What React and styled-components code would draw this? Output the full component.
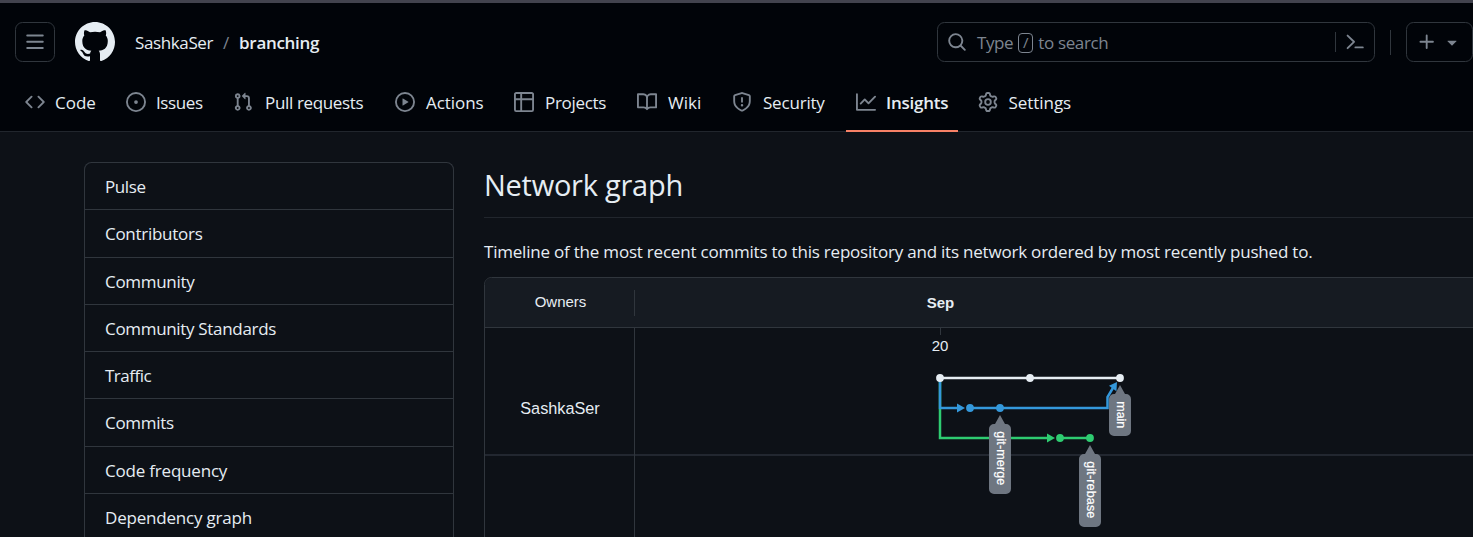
import React from "react";
import styled, { createGlobalStyle } from "styled-components";

const GlobalStyle = createGlobalStyle`
  *, *::before, *::after { box-sizing: border-box; }
  body {
    margin: 0;
    background: #0d1117;
    color: #e6edf3;
    font-family: "Open Sans", "Noto Sans", sans-serif;
    font-size: 17px;
    line-height: 24px;
    overflow: hidden;
  }
`;

const Page = styled.div`
  height: 537px;
  overflow: hidden;
  display: flex;
  flex-direction: column;
`;

const Header = styled.header`
  flex: none;
  height: 132px;
  background: #010409;
  border-top: 3px solid #42434e;
  border-bottom: 1px solid #21262d;
`;

const TopBar = styled.div`
  height: 78px;
  padding-left: 15px;
  display: flex;
  align-items: center;
`;

const MenuButton = styled.button`
  width: 40px;
  height: 40px;
  padding: 0;
  margin-right: 20px;
  display: grid;
  place-items: center;
  background: transparent;
  border: 1px solid #30363d;
  border-radius: 7.5px;
`;

const Text = styled.span`
  letter-spacing: ${(p) => p.$ls || 0}px;
  white-space: nowrap;
`;

const Breadcrumb = styled.nav`
  display: flex;
  flex: 1;
  margin-left: 20px;
  padding-top: 2px;
  b { font-weight: 600; }
`;

const Slash = styled.span`
  width: 26px;
  text-align: center;
  color: #7d8590;
`;

const Search = styled.div`
  width: 438px;
  height: 40px;
  padding: 0 9px;
  display: flex;
  align-items: center;
  color: #7d8590;
  border: 1px solid #30363d;
  border-radius: 7.5px;
`;

const SearchHint = styled.div`
  flex: 1;
  display: flex;
  align-items: center;
  gap: 5px;
  margin-left: 10px;
  padding-top: 2px;
`;

const Key = styled.kbd`
  width: 15px;
  height: 20px;
  font: 15px/17px "Open Sans", sans-serif;
  text-align: center;
  border: 1px solid #7d8590;
  border-radius: 4px;
`;

const Divider = styled.span`
  width: 1px;
  height: ${(p) => p.$h}px;
  margin: ${(p) => p.$m};
  background: #30363d;
`;

const CreateButton = styled.button`
  width: 67px;
  height: 40px;
  padding: 0 10px;
  display: flex;
  align-items: center;
  justify-content: space-between;
  background: transparent;
  border: 1px solid #30363d;
  border-radius: 7.5px;
`;

const Tabs = styled.nav`
  display: flex;
  gap: 10px;
  padding: 1px 0 0 15px;
  height: 51px;
`;

const Tab = styled.a`
  height: 50px;
  padding: 0 10px 8px;
  display: flex;
  align-items: center;
  gap: ${(p) => p.$gap || 10}px;
  font-weight: ${(p) => (p.$active ? 600 : 400)};
  border-bottom: 2px solid ${(p) => (p.$active ? "#f78166" : "transparent")};
`;

const TabLabel = styled(Text)`
  width: ${(p) => p.$w}px;
  padding-top: 2px;
`;

const Svg = styled.svg`
  flex: none;
  display: block;
  fill: ${(p) => p.$c || "#7d8590"};
`;

const Main = styled.main`
  flex: 1;
  display: flex;
  gap: 30px;
  padding: 30px 0 0 84px;
`;

const SideMenu = styled.ul`
  flex: none;
  width: 370px;
  margin: 0;
  padding: 0;
  list-style: none;
  height: 420px;
  border: 1px solid #30363d;
  border-bottom: 0;
  border-radius: 7.5px 7.5px 0 0;
`;

const SideItem = styled.li`
  height: 47.25px;
  padding: 12px 20px 0;
  border-bottom: 1px solid #30363d;
`;

const Content = styled.section`
  flex: none;
  width: 1000px;
`;

const Title = styled.h2`
  margin: 0 0 22px;
  height: 56px;
  font-size: 29px;
  line-height: 46px;
  font-weight: 400;
  letter-spacing: -0.25px;
  border-bottom: 1px solid #21262d;
`;

const Intro = styled.p`
  margin: 0 0 13px;
  white-space: nowrap;
  letter-spacing: -0.21px;
`;

const Network = styled.div`
  height: 270px;
  border: 1px solid #30363d;
  border-radius: 7.5px 0 0 0;
  overflow: hidden;
  font-family: "Liberation Sans", Arial, sans-serif;
`;

const NetworkHead = styled.div`
  height: 50px;
  display: flex;
  align-items: center;
  font-size: 15px;
  background: #161b22;
  border-bottom: 1px solid #30363d;
`;

const OwnersHead = styled.div`
  width: 150px;
  height: 26px;
  line-height: 24px;
  padding-left: 2px;
  text-align: center;
  border-right: 1px solid #30363d;
`;

const Month = styled.div`
  width: 611px;
  padding-top: 1px;
  text-align: center;
  font-weight: 700;
`;

const NetworkBody = styled.div`
  display: flex;
  height: 220px;
`;

const OwnerColumn = styled.div`
  flex: none;
  width: 150px;
  border-right: 1px solid #30363d;
`;

const Owner = styled.div`
  height: 128px;
  padding: 68px 0 0 1px;
  text-align: center;
  font-size: 16.25px;
  border-bottom: 2px solid #222730;
`;

const GraphSvg = styled.svg`
  display: block;
  flex: none;
  text { font-family: "Liberation Sans", Arial, sans-serif; }
`;

const PATHS = {
  menu: "M1 2.75A.75.75 0 0 1 1.75 2h12.5a.75.75 0 0 1 0 1.5H1.75A.75.75 0 0 1 1 2.75Zm0 5A.75.75 0 0 1 1.75 7h12.5a.75.75 0 0 1 0 1.5H1.75A.75.75 0 0 1 1 7.75ZM1.75 12h12.5a.75.75 0 0 1 0 1.5H1.75a.75.75 0 0 1 0-1.5Z",
  mark: "M8 0c4.42 0 8 3.58 8 8a8.013 8.013 0 0 1-5.45 7.59c-.4.08-.55-.17-.55-.38 0-.27.01-1.13.01-2.2 0-.75-.25-1.23-.54-1.48 1.78-.2 3.65-.88 3.65-3.95 0-.88-.31-1.59-.82-2.15.08-.2.36-1.02-.08-2.12 0 0-.67-.22-2.2.82-.64-.18-1.32-.27-2-.27-.68 0-1.36.09-2 .27-1.53-1.03-2.2-.82-2.2-.82-.44 1.1-.16 1.92-.08 2.12-.51.56-.82 1.28-.82 2.15 0 3.06 1.86 3.75 3.64 3.95-.23.2-.44.55-.51 1.07-.46.21-1.61.55-2.33-.66-.15-.24-.6-.83-1.23-.82-.67.01-.27.38.01.53.34.19.73.9.82 1.13.16.45.68 1.31 2.69.94 0 .67.01 1.3.01 1.49 0 .21-.15.45-.55.38A7.995 7.995 0 0 1 0 8c0-4.42 3.58-8 8-8Z",
  code: "m11.28 3.22 4.25 4.25a.75.75 0 0 1 0 1.06l-4.25 4.25a.749.749 0 0 1-1.275-.326.749.749 0 0 1 .215-.734L13.94 8l-3.72-3.72a.749.749 0 0 1 .326-1.275.749.749 0 0 1 .734.215Zm-6.56 0a.751.751 0 0 1 1.042.018.751.751 0 0 1 .018 1.042L2.06 8l3.72 3.72a.749.749 0 0 1-.326 1.275.749.749 0 0 1-.734-.215L.47 8.53a.75.75 0 0 1 0-1.06Z",
  issue: "M8 9.5a1.5 1.5 0 1 0 0-3 1.5 1.5 0 0 0 0 3ZM8 0a8 8 0 1 1 0 16A8 8 0 0 1 8 0ZM1.5 8a6.5 6.5 0 1 0 13 0 6.5 6.5 0 0 0-13 0Z",
  pull: "M1.5 3.25a2.25 2.25 0 1 1 3 2.122v5.256a2.251 2.251 0 1 1-1.5 0V5.372A2.25 2.25 0 0 1 1.5 3.25Zm5.677-.177L9.573.677A.25.25 0 0 1 10 .854V2.5h1A2.5 2.5 0 0 1 13.5 5v5.628a2.251 2.251 0 1 1-1.5 0V5a1 1 0 0 0-1-1h-1v1.646a.25.25 0 0 1-.427.177L7.177 3.427a.25.25 0 0 1 0-.354ZM3.75 2.5a.75.75 0 1 0 0 1.5.75.75 0 0 0 0-1.5Zm0 9.5a.75.75 0 1 0 0 1.5.75.75 0 0 0 0-1.5Zm8.25.75a.75.75 0 1 0 1.5 0 .75.75 0 0 0-1.5 0Z",
  play: "M8 0a8 8 0 1 1 0 16A8 8 0 0 1 8 0ZM1.5 8a6.5 6.5 0 1 0 13 0 6.5 6.5 0 0 0-13 0Zm4.879-2.773 4.264 2.559a.25.25 0 0 1 0 .428l-4.264 2.559A.25.25 0 0 1 6 10.559V5.442a.25.25 0 0 1 .379-.215Z",
  table: "M0 1.75C0 .784.784 0 1.75 0h12.5C15.216 0 16 .784 16 1.75v12.5A1.75 1.75 0 0 1 14.25 16H1.75A1.75 1.75 0 0 1 0 14.25ZM6.5 6.5v8h7.75a.25.25 0 0 0 .25-.25V6.5Zm8-1.5V1.75a.25.25 0 0 0-.25-.25H6.5V5Zm-13 1.5v7.75c0 .138.112.25.25.25H5v-8ZM5 5V1.5H1.75a.25.25 0 0 0-.25.25V5Z",
  book: "M0 1.75A.75.75 0 0 1 .75 1h4.253c1.227 0 2.317.59 3 1.501A3.743 3.743 0 0 1 11.006 1h4.245a.75.75 0 0 1 .75.75v10.5a.75.75 0 0 1-.75.75h-4.507a2.25 2.25 0 0 0-1.591.659l-.622.621a.75.75 0 0 1-1.06 0l-.622-.621A2.25 2.25 0 0 0 5.258 13H.75a.75.75 0 0 1-.75-.75Zm7.251 10.324.004-5.073-.002-2.253A2.25 2.25 0 0 0 5.003 2.5H1.5v9h3.757a3.75 3.75 0 0 1 1.994.574ZM8.755 4.75l-.004 7.322a3.752 3.752 0 0 1 1.992-.572H14.5v-9h-3.495a2.25 2.25 0 0 0-2.25 2.25Z",
  shield: "M7.467.133a1.748 1.748 0 0 1 1.066 0l5.25 1.68A1.75 1.75 0 0 1 15 3.48V7c0 1.566-.32 3.182-1.303 4.682-.983 1.498-2.585 2.813-5.032 3.855a1.697 1.697 0 0 1-1.33 0c-2.447-1.042-4.049-2.357-5.032-3.855C1.32 10.182 1 8.566 1 7V3.48a1.75 1.75 0 0 1 1.217-1.667Zm.61 1.429a.25.25 0 0 0-.153 0l-5.25 1.68a.25.25 0 0 0-.174.238V7c0 1.358.275 2.666 1.057 3.86.784 1.194 2.121 2.34 4.366 3.297a.196.196 0 0 0 .154 0c2.245-.956 3.582-2.104 4.366-3.298C13.225 9.666 13.5 8.36 13.5 7V3.48a.251.251 0 0 0-.174-.237l-5.25-1.68ZM8.75 4.75v3a.75.75 0 0 1-1.5 0v-3a.75.75 0 0 1 1.5 0ZM9 10.5a1 1 0 1 1-2 0 1 1 0 0 1 2 0Z",
  graph: "M1.5 1.75V13.5h13.75a.75.75 0 0 1 0 1.5H.75a.75.75 0 0 1-.75-.75V1.75a.75.75 0 0 1 1.5 0Zm14.28 2.53-5.25 5.25a.75.75 0 0 1-1.06 0L7 7.06 4.28 9.78a.751.751 0 0 1-1.042-.018.751.751 0 0 1-.018-1.042l3.25-3.25a.75.75 0 0 1 1.06 0L10 7.94l4.72-4.72a.751.751 0 0 1 1.042.018.751.751 0 0 1 .018 1.042Z",
  gear: "M8 0a8.2 8.2 0 0 1 .701.031C9.444.095 9.99.645 10.16 1.29l.288 1.107c.018.066.079.158.212.224.231.114.454.243.668.386.123.082.233.09.299.071l1.103-.303c.644-.176 1.392.021 1.82.63.27.385.506.792.704 1.218.315.675.111 1.422-.364 1.891l-.814.806c-.049.048-.098.147-.088.294.016.257.016.515 0 .772-.01.147.038.246.088.294l.814.806c.475.469.679 1.216.364 1.891a7.977 7.977 0 0 1-.704 1.217c-.428.61-1.176.807-1.82.63l-1.102-.302c-.067-.019-.177-.011-.3.071a5.909 5.909 0 0 1-.668.386c-.133.066-.194.158-.211.224l-.29 1.106c-.168.646-.715 1.196-1.458 1.26a8.006 8.006 0 0 1-1.402 0c-.743-.064-1.289-.614-1.458-1.26l-.289-1.106c-.018-.066-.079-.158-.212-.224a5.738 5.738 0 0 1-.668-.386c-.123-.082-.233-.09-.299-.071l-1.103.303c-.644.176-1.392-.021-1.82-.63a8.12 8.12 0 0 1-.704-1.218c-.315-.675-.111-1.422.363-1.891l.815-.806c.05-.048.098-.147.088-.294a6.214 6.214 0 0 1 0-.772c.01-.147-.038-.246-.088-.294l-.815-.806C.635 6.045.431 5.298.746 4.623a7.92 7.92 0 0 1 .704-1.217c.428-.61 1.176-.807 1.82-.63l1.102.302c.067.019.177.011.3-.071.214-.143.437-.272.668-.386.133-.066.194-.158.211-.224l.29-1.106C6.009.645 6.556.095 7.299.03 7.53.01 7.764 0 8 0Zm-.571 1.525c-.036.003-.108.036-.137.146l-.289 1.105c-.147.561-.549.967-.998 1.189-.173.086-.34.183-.5.29-.417.278-.97.423-1.529.27l-1.103-.303c-.109-.03-.175.016-.195.045-.22.312-.412.644-.573.99-.014.031-.021.11.059.19l.815.806c.411.406.562.957.53 1.456a4.709 4.709 0 0 0 0 .582c.032.499-.119 1.05-.53 1.456l-.815.806c-.081.08-.073.159-.059.19.162.346.353.677.573.989.02.03.085.076.195.046l1.102-.303c.56-.153 1.113-.008 1.53.27.161.107.328.204.501.29.447.222.85.629.997 1.189l.289 1.105c.029.109.101.143.137.146a6.6 6.6 0 0 0 1.142 0c.036-.003.108-.036.137-.146l.289-1.105c.147-.561.549-.967.998-1.189.173-.086.34-.183.5-.29.417-.278.97-.423 1.529-.27l1.103.303c.109.029.175-.016.195-.045.22-.313.411-.644.573-.99.014-.031.021-.11-.059-.19l-.815-.806c-.411-.406-.562-.957-.53-1.456a4.709 4.709 0 0 0 0-.582c-.032-.499.119-1.05.53-1.456l.815-.806c.081-.08.073-.159.059-.19a6.464 6.464 0 0 0-.573-.989c-.02-.03-.085-.076-.195-.046l-1.102.303c-.56.153-1.113.008-1.53-.27a4.44 4.44 0 0 0-.501-.29c-.447-.222-.85-.629-.997-1.189l-.289-1.105c-.029-.11-.101-.143-.137-.146a6.6 6.6 0 0 0-1.142 0ZM11 8a3 3 0 1 1-6 0 3 3 0 0 1 6 0ZM9.5 8a1.5 1.5 0 1 0-3.001.001A1.5 1.5 0 0 0 9.5 8Z",
  search: "M10.68 11.74a6 6 0 0 1-7.922-8.982 6 6 0 0 1 8.982 7.922l3.04 3.04a.749.749 0 0 1-.326 1.275.749.749 0 0 1-.734-.215ZM11.5 7a4.499 4.499 0 1 0-8.997 0A4.499 4.499 0 0 0 11.5 7Z",
  plus: "M7.75 2a.75.75 0 0 1 .75.75V7h4.25a.75.75 0 0 1 0 1.5H8.5v4.25a.75.75 0 0 1-1.5 0V8.5H2.75a.75.75 0 0 1 0-1.5H7V2.75A.75.75 0 0 1 7.75 2Z",
  triangle: "m4.427 7.427 3.396 3.396a.25.25 0 0 0 .354 0l3.396-3.396A.25.25 0 0 0 11.396 7H4.604a.25.25 0 0 0-.177.427Z",
};

const Icon = ({ name, size = 20, color }) => (
  <Svg width={size} height={size} viewBox="0 0 16 16" $c={color}>
    <path fillRule="evenodd" d={PATHS[name]} />
  </Svg>
);

const PromptIcon = () => (
  <Svg width="20" height="20" viewBox="0 0 20 20">
    <path d="M2.6 3.6 9 9.8 2.6 16.2M10.4 15.4h7.4" fill="none" stroke="#7d8590" strokeWidth="1.9" strokeLinecap="round" strokeLinejoin="round" />
  </Svg>
);

const TABS = [
  { icon: "code", label: "Code", w: 41 },
  { icon: "issue", label: "Issues", w: 47, ls: -0.4 },
  { icon: "pull", label: "Pull requests", w: 100, ls: -0.35, gap: 12 },
  { icon: "play", label: "Actions", w: 58, gap: 11, ls: -0.05 },
  { icon: "table", label: "Projects", w: 62, gap: 11, ls: -0.3 },
  { icon: "book", label: "Wiki", w: 34, gap: 11 },
  { icon: "shield", label: "Security", w: 63, gap: 11, ls: -0.2 },
  { icon: "graph", label: "Insights", w: 62, ls: -0.25, active: true },
  { icon: "gear", label: "Settings", w: 62.5, gap: 10.5, ls: -0.05 },
];

const SIDE = [
  ["Pulse", -0.4],
  ["Contributors", -0.28],
  ["Community", -0.3],
  ["Community Standards", -0.32],
  ["Traffic", -0.5],
  ["Commits", -0.3],
  ["Code frequency", -0.2],
  ["Dependency graph", -0.2],
];

const BRANCHES = [
  { name: "main", x: 1120, y: 385, h: 42, len: 27 },
  { name: "git-merge", x: 1000, y: 415, h: 70, len: 54 },
  { name: "git-rebase", x: 1090, y: 445, h: 73, len: 57 },
];

const COMMITS = [
  [940, 378, "#e6edf3"], [1030, 378, "#e6edf3"], [1120, 378, "#e6edf3"],
  [970, 408, "#3498db"], [1000, 408, "#3498db"],
  [1060, 438, "#2ecc71"], [1090, 438, "#2ecc71"],
];

const CommitGraph = () => (
  <GraphSvg width="838" height="209" viewBox="635 328 838 209">
    <path d="M635 455h838" stroke="#222730" strokeWidth="2" />
    <path d="M940.5 328v7" stroke="#30363d" />
    <text x="940" y="350.6" fontSize="15" fill="#e6edf3" textAnchor="middle">20</text>
    <g fill="none" strokeWidth="2.5">
      <path d="M940 378V438H1049" stroke="#2ecc71" />
      <path d="M940 378V408H959M970 408H1107.5V397L1113.5 387" stroke="#3498db" />
      <path d="M1060 438h30" stroke="#2ecc71" />
      <path d="M940 378h180" stroke="#e6edf3" />
    </g>
    <path d="M957 403.5 965 408 957 412.5Z" fill="#3498db" />
    <path d="M1117 382 1116.4 391.2 1109 385.8Z" fill="#3498db" />
    <path d="M1047 433.5 1055 438 1047 442.5Z" fill="#2ecc71" />
    {COMMITS.map(([x, y, c]) => <circle key={`${x}-${y}`} cx={x} cy={y} r="3.9" fill={c} />)}
    {BRANCHES.map((b) => (
      <g key={b.name} transform={`translate(${b.x} ${b.y})`}>
        <path d={`M0 0 5 9H6a5 5 0 0 1 5 5V${b.h + 4}a5 5 0 0 1-5 5H-6a5 5 0 0 1-5-5V14a5 5 0 0 1 5-5h1Z`} fill="#6e7681" />
        <text transform="translate(-3.2 16.3) rotate(90)" fontSize="12.5" fill="#fff" stroke="#fff" strokeWidth=".2" textLength={b.len}>{b.name}</text>
      </g>
    ))}
  </GraphSvg>
);

export default function App() {
  return (
    <Page>
      <GlobalStyle />
      <Header>
        <TopBar>
          <MenuButton><Icon name="menu" /></MenuButton>
          <Icon name="mark" size={40} color="#e6edf3" />
          <Breadcrumb>
            <Text $ls={-0.38}>SashkaSer</Text>
            <Slash>/</Slash>
            <Text as="b" $ls={-0.3}>branching</Text>
          </Breadcrumb>
          <Search>
            <Icon name="search" />
            <SearchHint>
              <Text $ls={-0.4}>Type</Text>
              <Key>/</Key>
              <Text $ls={-0.35}>to search</Text>
            </SearchHint>
            <Divider $h={20} $m="0 9px 0 0" />
            <PromptIcon />
          </Search>
          <Divider $h={25} $m="0 15px" />
          <CreateButton>
            <Icon name="plus" />
            <Icon name="triangle" />
          </CreateButton>
        </TopBar>
        <Tabs>
          {TABS.map((t) => (
            <Tab key={t.label} $active={t.active} $gap={t.gap}>
              <Icon name={t.icon} />
              <TabLabel $w={t.w} $ls={t.ls}>{t.label}</TabLabel>
            </Tab>
          ))}
        </Tabs>
      </Header>
      <Main>
        <SideMenu>
          {SIDE.map(([label, ls]) => (
            <SideItem key={label}><Text $ls={ls}>{label}</Text></SideItem>
          ))}
        </SideMenu>
        <Content>
          <Title>Network graph</Title>
          <Intro>Timeline of the most recent commits to this repository and its network ordered by most recently pushed to.</Intro>
          <Network>
            <NetworkHead>
              <OwnersHead>Owners</OwnersHead>
              <Month>Sep</Month>
            </NetworkHead>
            <NetworkBody>
              <OwnerColumn><Owner>SashkaSer</Owner></OwnerColumn>
              <CommitGraph />
            </NetworkBody>
          </Network>
        </Content>
      </Main>
    </Page>
  );
}
